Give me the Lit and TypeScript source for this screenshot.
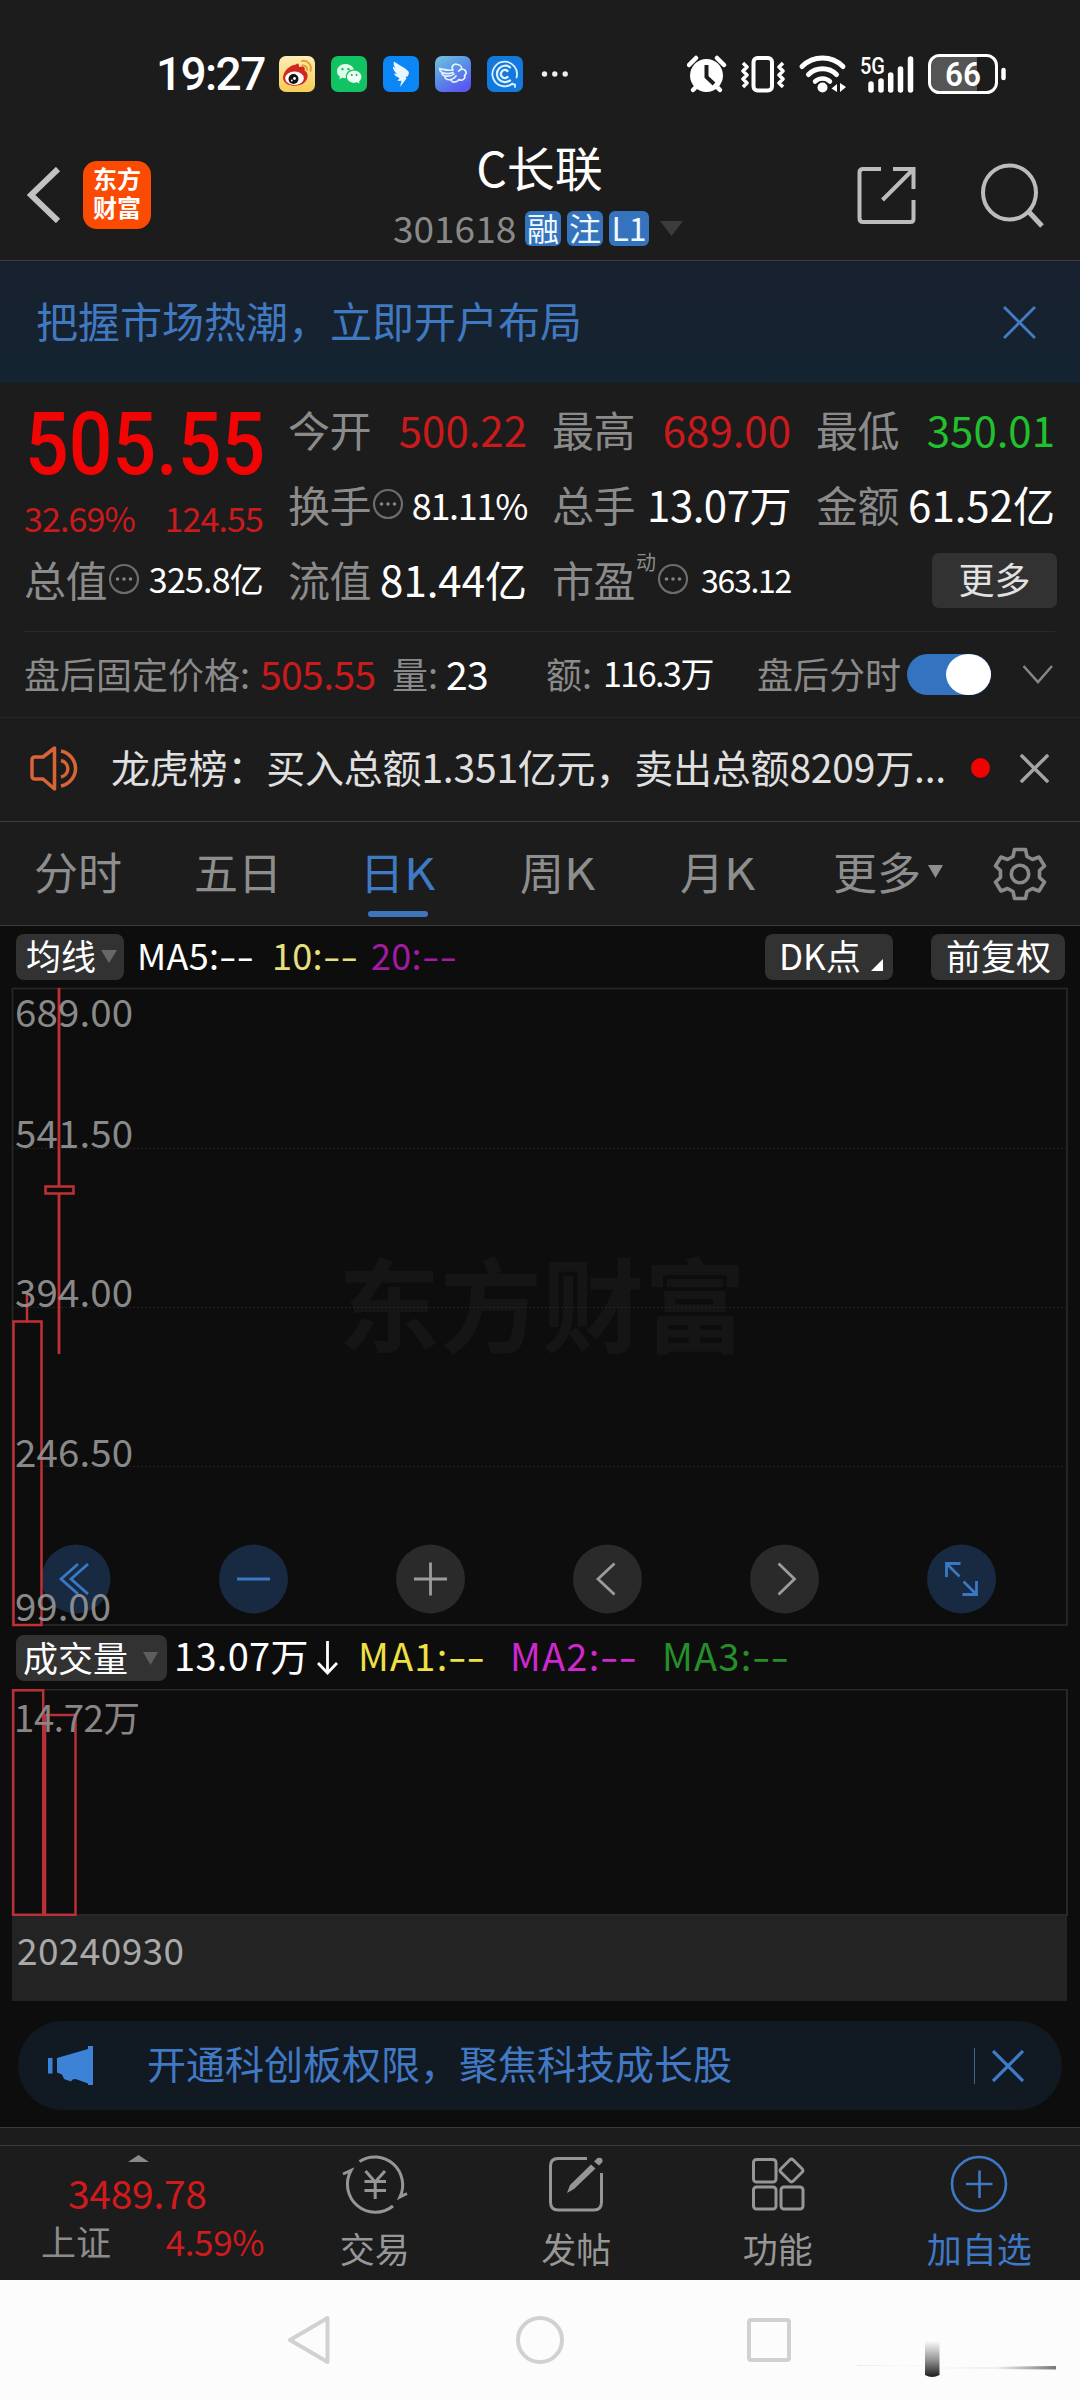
import { LitElement, html, svg, css } from "lit";
import { customElement } from "lit/decorators.js";

const x = (size: number, stroke: number, color: string) => html`
  <svg width=${size} height=${size} viewBox="0 0 32 32" fill="none" stroke=${color} stroke-width=${stroke}>
    <path d="M1 1L31 31M31 1L1 31" />
  </svg>`;

const more = html`
  <svg class="dots" width="32" height="32" viewBox="0 0 32 32">
    <circle cx="16" cy="16" r="14" fill="none" stroke="#6c6c6c" stroke-width="2.2" />
    <g fill="#858585"><circle cx="9.5" cy="16" r="1.8" /><circle cx="16" cy="16" r="1.8" /><circle cx="22.5" cy="16" r="1.8" /></g>
  </svg>`;

const appIcons = [
  html`<svg width="36" height="36" viewBox="0 0 36 36">
    <defs><linearGradient id="wb" x2="0" y2="1"><stop stop-color="#fdeeb4" /><stop offset="1" stop-color="#f8cc55" /></linearGradient></defs>
    <rect width="36" height="36" rx="7" fill="url(#wb)" />
    <path d="M4 22C4 15 11 9 17 8.500C18.500 6.500 20.500 8 20 11C24 9.500 27 11 25.500 14.500C30 17 29.500 23 25 27C19 31.500 5 31 4 22Z" fill="#d32822" />
    <ellipse cx="15.500" cy="22.300" rx="9.300" ry="6.700" fill="#fff" />
    <circle cx="14.500" cy="23" r="5" fill="#16100c" /><circle cx="15.500" cy="22.500" r="1.400" fill="#fff" /><circle cx="12.800" cy="24.500" r=".9" fill="#fff" />
    <path d="M23 5C29 4 33 9 31.500 15M23.500 9.500C27 9 28.500 11.500 28 14" fill="none" stroke="#e3a030" stroke-width="2" stroke-linecap="round" />
  </svg>`,
  html`<svg width="36" height="36" viewBox="0 0 36 36">
    <rect width="36" height="36" rx="7" fill="#12c364" />
    <path d="M14.500 8C9.300 8 6 11.300 6 15.200C6 17.500 7.200 19.400 9 20.700L8.300 23.300L11.300 21.800C12.500 22.100 13.600 22.300 15 22.300C14 17 18 13.500 23 13.600C22 10.200 18.600 8 14.500 8Z" fill="#dcfbe8" />
    <path d="M23.200 14.800C19 14.800 16 17.500 16 20.800C16 24.200 19 26.800 23.200 26.800C24.200 26.800 25.200 26.600 26.200 26.300L28.600 27.500L28 25.400C29.500 24.200 30.400 22.600 30.400 20.800C30.400 17.500 27.300 14.800 23.200 14.800Z" fill="#f0fff6" />
    <g fill="#12a356"><circle cx="11.500" cy="13.200" r="1.100" /><circle cx="17.500" cy="13.200" r="1.100" /><circle cx="20.800" cy="19" r="1" /><circle cx="25.500" cy="19" r="1" /></g>
  </svg>`,
  html`<svg width="36" height="36" viewBox="0 0 36 36">
    <rect width="36" height="36" rx="7" fill="#0d86f5" />
    <path d="M11 5.500C14 8 22 11.500 25.500 15.500C26.500 17 25.500 19 24.500 20.500L22.500 20.800L23.500 22.500L17 31L18.500 24.800L14.500 25L16.500 22C13 21 11.500 19 11 17.500L14 18C11 15.500 9.500 12.500 10 10.500L12.500 12C10.500 9.500 10.300 7 11 5.500Z" fill="#e8f6ff" />
  </svg>`,
  html`<svg width="36" height="36" viewBox="0 0 36 36">
    <defs><linearGradient id="cl" x2=".6" y2="1"><stop stop-color="#6fc7e0" /><stop offset=".5" stop-color="#5a92e6" /><stop offset="1" stop-color="#5a5af0" /></linearGradient></defs>
    <rect width="36" height="36" rx="7" fill="url(#cl)" />
    <path d="M4.500 12.500C9 13.500 13 15 18 14C15.500 10.500 19 7 22.500 8.500C26 9 27 11.500 26.500 13C31 13 32.500 17 29.500 19.500C31 22.500 27 25.500 24 23.500C21.500 27 17 27 15.500 23.500C12 24.500 9 22 10.500 20C7.500 19.500 6.500 17.500 7 16.500C5.500 15.500 4.500 14 4.500 12.500M10.500 20C14 20.500 17 20 19 18M7 16.500C11 18 15 18 18 16.500M15.500 23.500C18 23 20 21.500 21 20M26.500 13L23.500 15" fill="none" stroke="#e4f2ff" stroke-width="1.700" stroke-linecap="round" stroke-linejoin="round" />
  </svg>`,
  html`<svg width="36" height="36" viewBox="0 0 36 36">
    <rect width="36" height="36" rx="7" fill="#1479dc" />
    <g fill="none" stroke="#dcf2ff" stroke-linecap="round">
      <path d="M25.500 27.500A12.300 12.300 0 1 1 29.500 21.500M24.500 28L28 28.500V31" stroke-width="1.800" />
      <path d="M23 11.300A8.200 8.200 0 1 0 23 24.500" stroke-width="2.200" />
      <path d="M20.500 15A4 4 0 1 0 20.500 21" stroke-width="2.400" />
    </g>
  </svg>`,
];

@customElement("status-bar")
export class StatusBar extends LitElement {
  static styles = css`
    :host { display: flex; align-items: center; height: 148px; padding-left: 156px; box-sizing: border-box; }
    svg { display: block; flex: none; }
    .time { font: 500 46px/48px Roboto, sans-serif; letter-spacing: -1.6px; color: #fff; width: 123px; white-space: nowrap; }
    .apps { display: flex; gap: 16px; width: 261px; }
    .net { font: 500 23px/24px "Roboto", sans-serif; }
  `;
  render() {
    return html`
      <div class="time">19:27</div>
      <div class="apps">${appIcons}</div>
      <svg width="147" height="40" viewBox="0 0 147 40" fill="#eee"><circle cx="4.500" cy="20" r="2.700" /><circle cx="14.800" cy="20" r="2.700" /><circle cx="25.200" cy="20" r="2.700" /></svg>
      <svg width="324" height="44" viewBox="687 51 324 44" fill="none" stroke="#fff">
        <circle cx="706.500" cy="74.500" r="16.500" fill="#fff" stroke="none" />
        <path d="M689 64L696 57M724 64L717 57" stroke-width="4.500" stroke-linecap="round" />
        <path d="M693 89L698 84M720 89L715 84" stroke-width="4.500" stroke-linecap="round" />
        <path d="M706.500 64V76L714 83" stroke="#1c1c1c" stroke-width="4" />
        <rect x="753.500" y="57" width="18.500" height="32.500" rx="4" stroke-width="4" />
        <path d="M743 62L747 66L743 70L747 74L743 78L747 82L743 86M783 62L779 66L783 70L779 74L783 78L779 82L783 86" stroke-width="3.500" stroke-linejoin="round" />
        <path d="M802 65.500A29 29 0 0 1 843 65.500M808.500 73.500A20 20 0 0 1 836.500 73.500" stroke-width="5" stroke-linecap="round" />
        <path d="M815 80.500A11 11 0 0 1 830 80.500" stroke-width="4.500" stroke-linecap="round" />
        <circle cx="822.500" cy="86.500" r="5" fill="#fff" stroke="none" />
        <path d="M837 83V91L831.500 87.500ZM840 82L846 86L840 91Z" fill="#fff" stroke="none" />
        <text class="net" x="860" y="73" fill="#fff" stroke="none" textLength="25" lengthAdjust="spacingAndGlyphs">5G</text>
        <path d="M871 83V89M881 80V89M890.700 74V89M900.500 68V89M910.500 58V89" stroke-width="5.500" stroke-linecap="round" />
        <path d="M940 56H977V90H940A9 9 0 0 1 931 81V65A9 9 0 0 1 940 56Z" fill="#555" stroke="none" />
        <rect x="929.500" y="54.500" width="67" height="37" rx="10" stroke-width="3" />
        <path d="M1003.500 69V77" stroke-width="4.500" stroke-linecap="round" />
        <text x="945" y="85" fill="#fff" stroke="none" font-family="Roboto" font-weight="600" font-size="34" textLength="36" lengthAdjust="spacingAndGlyphs">66</text>
      </svg>`;
  }
}

@customElement("stock-header")
export class StockHeader extends LitElement {
  static styles = css`
    :host { display: grid; grid-template-columns: 83px 68px 1fr 59px 65px 63px 36px; grid-template-rows: 94px; align-items: center; height: 113px; border-bottom: 1px solid #3c3c3e; box-sizing: border-box; }
    svg { display: block; }
    .back { margin-left: 27px; }
    .brand { width: 68px; height: 68px; border-radius: 14px; background: #fb4b02; color: #fff; font-weight: 700; font-size: 24px; line-height: 28.500px; text-align: center; padding-top: 3px; box-sizing: border-box; white-space: pre; }
    .mid { width: 389px; justify-self: center; margin-left: 71px; height: 119px; }
    .title { font-size: 48px; line-height: 60px; color: #fff; text-align: center; }
    .sub { display: flex; align-items: center; height: 62px; padding-left: 48px; gap: 6px; }
    .code { font-size: 37px; line-height: 44px; color: #8a8a8a; width: 126px; }
    .badge { display: flex; align-items: center; justify-content: center; width: 36px; height: 35px; margin-top: 3px; border-radius: 6px; background: #3573be; color: #eefaff; font-size: 32px; line-height: 30px; padding-bottom: 3px; box-sizing: border-box; }
    .lv { width: 40px; }
    .tri { margin: 4px 0 0 5px; }
    .search { grid-column: 6; }
  `;
  render() {
    return html`
      <svg class="back" width="34" height="56" viewBox="0 0 34 56" fill="none" stroke="#c2c2c2" stroke-width="6"><path d="M31 2L4 28L31 54" /></svg>
      <div class="brand">东方
财富</div>
      <div class="mid">
        <div class="title">C长联</div>
        <div class="sub">
          <span class="code">301618</span><span class="badge">融</span><span class="badge">注</span><span class="badge lv">L1</span>
          <svg class="tri" width="23" height="15" viewBox="0 0 23 15"><path d="M0 0H23L11.500 15Z" fill="#403b3b" /></svg>
        </div>
      </div>
      <svg width="59" height="59" viewBox="857 165 59 59" fill="none" stroke="#bcbcbc" stroke-width="4">
        <path d="M881 168H863Q859.500 168 859.500 171.500V217Q859.500 221 863 221H910.500Q913.500 221 913.500 218V199M893 168H913.500V188M913 168.500L882.500 199" />
      </svg>
      <svg class="search" width="63" height="65" viewBox="981 162 63 65" fill="none" stroke="#bcbcbc"><ellipse cx="1009.500" cy="191.500" rx="26.500" ry="27" stroke-width="4" /><path d="M1029 211L1042 225" stroke-width="5" /></svg>
    `;
  }
}

@customElement("quote-panel")
export class QuotePanel extends LitElement {
  static styles = css`
    :host { display: block; height: 334px; position: relative; }
    svg { display: block; flex: none; }
    .grid { display: grid; grid-template-columns: repeat(4, 239px); column-gap: 25px; grid-template-rows: 75px 75px 75px; padding: 8px 25px 0 24px; height: 248px; box-sizing: border-box; }
    .cell { display: flex; align-items: center; justify-content: space-between; white-space: nowrap; font-size: 42px; line-height: 50px; color: #fff; padding-top: 1px; box-sizing: border-box; }
    .label { display: flex; align-items: center; gap: 1px; color: #8b8b8b; letter-spacing: -.5px; }
    .red { color: #cb1a1c; }
    .green { color: #21c02d; }
    .s { font-size: 36px; letter-spacing: -1.300px; }
    .t { font-size: 34px; letter-spacing: -.8px; }
    .u { font-size: 32px; letter-spacing: -1.300px; }
    .w { letter-spacing: -.5px; }
    .lead { grid-row: span 2; display: flex; flex-direction: column; color: #f00404; }
    .price { font: 500 87px/86px Roboto, sans-serif; height: 96px; padding-top: 10px; box-sizing: border-box; white-space: nowrap; transform: scaleX(.885); transform-origin: 0 0; margin-left: 1px; }
    .chg { display: flex; justify-content: space-between; font-size: 34px; line-height: 40px; letter-spacing: -.9px; color: #cb1a1c; padding-top: 11px; }
    .sup { font-size: 20px; line-height: 24px; align-self: flex-start; margin-top: -4px; letter-spacing: 0; }
    .btn { justify-self: end; align-self: center; width: 125px; height: 55px; margin: 3px -2px 0 0; border-radius: 7px; background: #323232; color: #e2e2e2; font-size: 36px; line-height: 51px; text-align: center; }
    .after { display: flex; align-items: center; height: 85px; margin: 0 25px 0 24px; font-size: 36px; line-height: 44px; color: #8b8b8b; white-space: nowrap; box-sizing: border-box; border-top: 1px solid #2a2a2a; }
    .after span { display: block; margin-top: -2px; }
    .fix { font-size: 39px; letter-spacing: -.6px; }
    .amt { font-size: 34px; letter-spacing: -1.500px; }
    .white { color: #fff; }
    .c1 { width: 236px; } .c2 { width: 132px; } .c3 { width: 54px; } .c4 { width: 100px; } .c5 { width: 57px; } .c6 { width: 154px; } .c7 { width: 149px; }
  `;
  render() {
    return html`
      <div class="grid">
        <div class="lead"><div class="price">505.55</div><div class="chg"><span>32.69%</span><span>124.55</span></div></div>
        <div class="cell"><span class="label">今开</span><span class="red">500.22</span></div>
        <div class="cell"><span class="label">最高</span><span class="red">689.00</span></div>
        <div class="cell"><span class="label">最低</span><span class="green">350.01</span></div>
        <div class="cell"><span class="label">换手${more}</span><span class="s">81.11%</span></div>
        <div class="cell"><span class="label">总手</span><span class="w">13.07万</span></div>
        <div class="cell"><span class="label">金额</span><span>61.52亿</span></div>
        <div class="cell"><span class="label">总值${more}</span><span class="t">325.8亿</span></div>
        <div class="cell"><span class="label">流值</span><span>81.44亿</span></div>
        <div class="cell"><span class="label">市盈<span class="sup">动</span>${more}</span><span class="u">363.12</span></div>
        <div class="btn">更多</div>
      </div>
      <div class="after">
        <span class="c1">盘后固定价格:</span><span class="c2 fix red">505.55</span><span class="c3">量:</span><span class="c4 fix white">23</span>
        <span class="c5">额:</span><span class="c6 amt white">116.3万</span><span class="c7">盘后分时</span>
        <svg width="148" height="42" viewBox="906 653 148 42">
          <rect x="907" y="654" width="84" height="41" rx="20.500" fill="#3373c0" /><ellipse cx="968.500" cy="674.500" rx="22.500" ry="20.500" fill="#fff" />
          <path d="M1023.500 666L1038 682L1052 666" fill="none" stroke="#868686" stroke-width="2.500" />
        </svg>
      </div>`;
  }
}

@customElement("notice-row")
export class NoticeRow extends LitElement {
  static styles = css`
    :host { display: flex; align-items: center; height: 105px; box-sizing: border-box; border-top: 1px solid #272727; border-bottom: 1px solid #3c3c3c; padding-left: 29px; padding-bottom: 3px; }
    svg { display: block; flex: none; }
    .text { width: 860px; margin-left: 29px; font-size: 39px; line-height: 50px; letter-spacing: -.2px; color: #e0e0e0; white-space: nowrap; padding-bottom: 5px; }
    .dot { width: 19px; height: 20px; border-radius: 50%; background: #f00202; margin-right: 30px; }
  `;
  render() {
    return html`
      <svg width="53" height="46" viewBox="28 745 53 46" fill="none" stroke="#d96436" stroke-width="3.500" stroke-linejoin="round">
        <path d="M53.500 748V789L42 779H34Q31 779 31 776V760Q31 757 34 757H42Z" />
        <path d="M60 751A19 18 0 0 1 60 786M60 760.500A9 8.500 0 0 1 60 777" />
      </svg>
      <div class="text">龙虎榜：买入总额1.351亿元，卖出总额8209万...</div>
      <div class="dot"></div>${x(29, 3.8, "#a4a4a4")}`;
  }
}

@customElement("period-tabs")
export class PeriodTabs extends LitElement {
  static styles = css`
    :host { display: flex; align-items: center; height: 104px; box-sizing: border-box; border-bottom: 1px solid #3c3c3c; padding-left: 34px; font-size: 44px; line-height: 54px; color: #8e8e8e; }
    svg { display: block; }
    .tab { display: flex; align-items: center; width: 160px; height: 103px; padding-bottom: 5px; box-sizing: border-box; white-space: nowrap; }
    .tab:nth-child(2) { width: 166px; }
    .tab:nth-child(3) { width: 160px; }
    .tab:nth-child(5) { width: 153px; }
    .tab:nth-child(6) { width: 160px; }
    .k { display: inline-block; transform: scaleX(1.1); transform-origin: 0 0; }
    .on { color: #3f7ac4; flex-direction: column; align-items: flex-start; padding: 22px 0 0; gap: 13px; }
    .on i { display: block; width: 60px; height: 6px; border-radius: 3px; background: #3f76bb; margin-left: 8px; }
  `;
  render() {
    return html`
      <div class="tab">分时</div><div class="tab">五日</div><div class="tab on"><span>日<span class="k">K</span></span><i></i></div><div class="tab">周<span class="k">K</span></div><div class="tab">月<span class="k">K</span></div>
      <div class="tab">更多<svg width="24" height="14" viewBox="0 0 24 14"><path d="M7 1H22L14.500 14Z" fill="#8e8e8e" /></svg></div>
      <svg width="54" height="54" viewBox="-27 -27 54 54" fill="none" stroke="#8a8a8a" stroke-width="3.600" stroke-linejoin="round">
        <path d="M-5.500 -24.500H5.500L7 -17.500L12.500 -14.500L19 -17L24.500 -8L19.500 -3.500V3.500L24.500 8L19 17L12.500 14.500L7 17.500L5.500 24.500H-5.500L-7 17.500L-12.500 14.500L-19 17L-24.500 8L-19.500 3.500V-3.500L-24.500 -8L-19 -17L-12.500 -14.500L-7 -17.500Z" />
        <circle r="8.700" />
      </svg>`;
  }
}

@customElement("chart-board")
export class ChartBoard extends LitElement {
  static styles = css`
    :host { display: block; height: 1201px; background: #0d0d0d; }
    svg { display: block; flex: none; }
    .bar { display: flex; align-items: center; height: 61px; padding-left: 16px; font-size: 36px; line-height: 44px; color: #fff; white-space: nowrap; }
    .vol { height: 62px; font-size: 38px; }
    .chip { display: flex; align-items: center; height: 46px; border-radius: 8px; background: #323232; font-size: 35px; line-height: 42px; box-sizing: border-box; }
    .chip span { display: block; margin-top: -3px; }
    .ma { width: 108px; padding-left: 10px; gap: 5px; }
    .vo { width: 151px; padding-left: 7px; gap: 15px; }
    .dk { width: 128px; padding-left: 14px; gap: 10px; }
    .fq { width: 134px; padding-left: 15px; margin-left: 38px; }
    .leg { display: block; margin-top: -5px; letter-spacing: .3px; }
    .leg b { display: inline-block; font-weight: 400; letter-spacing: 0; transform: scaleX(1.4); transform-origin: 0 0; }
    .vol .leg { margin-top: -6px; }
    .vol .m { letter-spacing: 1.200px; }
    .m5 { width: 135px; margin-left: 13px; }
    .m10 { width: 99px; color: #e6e07e; }
    .m20 { width: 394px; color: #a31ba3; }
    .now { width: 143px; margin-left: 7px; }
    .v1 { width: 152px; margin-left: 20px; color: #eee045; }
    .v2 { width: 152px; color: #cf28cf; }
    .v3 { color: #268f2a; }
    .date { margin: 0 13px 0 12px; height: 85px; background: #232324; color: #a9a9a9; font-size: 37px; line-height: 67px; letter-spacing: .4px; padding-left: 5px; box-sizing: border-box; }
    .promo { display: flex; align-items: center; height: 89px; margin: 20px 18px 0; border-radius: 45px; background: #111a23; color: #4279c4; font-size: 39px; line-height: 48px; box-sizing: border-box; padding-left: 28px; white-space: nowrap; }
    .promo span { width: 827px; margin: -8px 0 0 53px; }
    .sep { width: 1px; height: 36px; background: #40658f; margin-right: 17px; }
    text { font-family: "Noto Sans CJK SC", sans-serif; }
  `;
  render() {
    const labels: [string, number, number][] = [["689.00", 1027, 118], ["541.50", 1148, 118], ["394.00", 1307, 118], ["246.50", 1467, 118], ["99.00", 1621, 96]];
    const knobs: [number, boolean, string][] = [
      [76, true, "M2 -15L-15 0L2 15M12 -15L-5 0L12 15"],
      [253.5, true, "M-16.500 0H16.500"],
      [430.5, false, "M-16.500 0H16.500M0 -16.500V16.500"],
      [607.5, false, "M7 -15.500L-9.500 0L7 15.500"],
      [784.5, false, "M-6 -15.500L10 0L-6 15.500"],
      [961.5, true, "M-15 -2V-15.500H-1M-14.500 -15L-2 -2.500M15 2V15.500H1M14.500 15L2 2.500"],
    ];
    return html`
      <div class="bar">
        <div class="chip ma"><span>均线</span><svg width="16" height="13" viewBox="0 0 16 13"><path d="M0 0H16L8 13Z" fill="#686868" /></svg></div>
        <div class="leg m5">MA5:<b>--</b></div>
        <div class="leg m10">10:<b>--</b></div>
        <div class="leg m20">20:<b>--</b></div>
        <div class="chip dk"><span>DK点</span><svg width="12" height="28" viewBox="0 0 12 28"><path d="M12 16V28H0Z" fill="#fff" /></svg></div>
        <div class="chip fq"><span>前复权</span></div>
      </div>
      <svg width="1080" height="640" viewBox="0 987 1080 640">
        <text x="338" y="1345" font-size="102" font-weight="700" fill="#151515" textLength="408">东方财富</text>
        <rect x="12.500" y="988.500" width="1054.500" height="636.500" fill="none" stroke="#272727" stroke-width="1.800" />
        ${[1148.5, 1307.5, 1466.5].map((y) => svg`<path d="M13 ${y}H1067" stroke="#232323" stroke-dasharray="2 2" />`)}
        ${knobs.map(([cx, blue, d]) => svg`<g transform="translate(${cx} 1579)">
          <circle r="34.500" fill=${blue ? "#182a42" : "#2a2a2a"} />
          <path d=${d} fill="none" stroke=${blue ? "#3b78c4" : "#9c9c9c"} stroke-width="2.800" /></g>`)}
        <g fill="none" stroke="#c23034" stroke-width="2.500">
          <rect x="13.500" y="1321.500" width="28" height="303.500" /><path d="M27 1293V1321" />
          <path d="M59 988V1186M59 1194V1354" stroke-width="2.800" /><rect x="45.500" y="1186.500" width="28" height="7" />
        </g>
        ${labels.map(([t, y, w]) => svg`<text x="15" y=${y} font-size="38.500" fill="#969696" fill-opacity=".92" textLength=${w}>${t}</text>`)}
      </svg>
      <div class="bar vol">
        <div class="chip vo"><span>成交量</span><svg width="15" height="13" viewBox="0 0 15 13"><path d="M0 0H15L7.500 13Z" fill="#5e5e5e" /></svg></div>
        <div class="leg now">13.07万</div>
        <svg width="21" height="34" viewBox="0 0 21 34" fill="none" stroke="#fff" stroke-width="2.800"><path d="M10.500 0V32M1 22L10.500 32L20 22" /></svg>
        <div class="leg m v1">MA1:<b>--</b></div>
        <div class="leg m v2">MA2:<b>--</b></div>
        <div class="leg m v3">MA3:<b>--</b></div>
      </div>
      <svg width="1080" height="227" viewBox="0 1689 1080 227">
        <rect x="12.500" y="1689.500" width="1054.500" height="225.500" fill="none" stroke="#2b2b2b" stroke-width="1.800" />
        <g fill="none" stroke="#b93036" stroke-width="2.500"><rect x="13.200" y="1690.300" width="30" height="224.500" /><rect x="45" y="1715" width="30.500" height="199.800" /></g>
        <text x="14" y="1732" font-size="36.500" fill="#8d8585" textLength="126">14.72万</text>
      </svg>
      <div class="date">20240930</div>
      <div class="promo">
        <svg width="48" height="40" viewBox="46 2045 48 40" fill="#3c82d6"><path d="M48 2057H52.500V2072.500H48ZM57 2057L88 2048V2045H93V2084H88V2082.500L77 2078.500Q73 2077 71 2080.500L64 2078L62 2073.500L57 2071.500Z" /></svg>
        <span>开通科创板权限，聚焦科技成长股</span><div class="sep"></div>${x(32, 3.3, "#3f7cc8")}
      </div>`;
  }
}

@customElement("bottom-bar")
export class BottomBar extends LitElement {
  static styles = css`
    :host { display: grid; grid-template-columns: 274px repeat(4, 201.500px); height: 153px; box-sizing: border-box; border-top: 1px solid #3a3a3a; color: #979797; padding-top: 17px; }
    svg { display: block; }
    .index { border-top: 1px solid #3a3a3a; padding: 9px 10px 0 41px; }
    .up { margin-left: 87px; }
    .val { font-size: 39px; line-height: 50px; margin: 5px 0 0 27px; letter-spacing: -.3px; color: #cf1b1d; }
    .row { display: flex; justify-content: space-between; font-size: 35px; line-height: 40px; margin-top: 4px; color: #8c8c8c; }
    .row span:last-child { color: #cf1b1d; letter-spacing: -.4px; }
    .item { border-top: 1px solid #3a3a3a; display: flex; flex-direction: column; align-items: center; padding-top: 8px; font-size: 35px; line-height: 44px; gap: 12px; }
    .blue { color: #3f78c4; }
    .wide { width: 274px; }
    .item:last-child, .end { border-top: 1px solid #3a3a3a; }
  `;
  render() {
    return html`
      <div class="index">
        <svg class="up" width="21" height="7" viewBox="0 0 21 7"><path d="M0 7L10.500 0L21 7Z" fill="#8a8a8a" /></svg>
        <div class="val">3489.78</div>
        <div class="row"><span>上证</span><span>4.59%</span></div>
      </div>
      <div class="item"><svg width="68" height="60" viewBox="341.500 2154 68 60" fill="none" stroke="#969696" stroke-width="3">
        <path d="M360 2161.500A28 28 0 0 1 400.500 2197L407.500 2193.500M393.500 2206A28 28 0 0 1 351.500 2170.500L343.500 2174" />
        <path d="M366 2171L375.700 2182L385.500 2171M365 2181.500H386.500M365 2190.500H386.500M375.700 2182V2199" /></svg>交易</div>
      <div class="item"><svg width="56" height="60" viewBox="549 2154 56 60" fill="none" stroke="#969696" stroke-width="3">
        <path d="M588 2158.500H559Q551.500 2158.500 551.500 2166V2202Q551.500 2210 559 2210H595Q602.500 2210 602.500 2202V2173" />
        <path d="M568 2193L571 2185L592 2164.500L596.500 2168.500L575 2189ZM595 2161.500L598.500 2158Q604 2156.500 603.500 2162L600 2165.500Z" fill="#969696" stroke="none" /></svg>发帖</div>
      <div class="item"><svg width="54" height="60" viewBox="751 2154 54 60" fill="none" stroke="#969696" stroke-width="3">
        <rect x="753.500" y="2159.500" width="22.500" height="22.500" rx="3" /><rect x="753.500" y="2187" width="22.500" height="22" rx="3" /><rect x="781" y="2187" width="22" height="22" rx="3" />
        <rect x="-8.700" y="-8.700" width="17.400" height="17.400" rx="2.500" transform="translate(791.500 2170.500) rotate(45)" /></svg>功能</div>
      <div class="item blue"><svg width="58" height="60" viewBox="950 2154 58 60" fill="none" stroke="#3f78c4" stroke-width="2.600">
        <circle cx="979" cy="2184" r="27" /><path d="M966 2184H992.500M979.500 2170.500V2198" /></svg>加自选</div>`;
  }
}

@customElement("system-nav")
export class SystemNav extends LitElement {
  static styles = css`:host { display: block; height: 120px; background: #fcfcfc; } svg { display: block; }`;
  render() {
    return html`<svg width="1080" height="120" viewBox="0 2280 1080 120" fill="none" stroke="#d1d1d1" stroke-width="4" stroke-linejoin="round">
      <defs>
        <linearGradient id="k" x2="0" y2="1"><stop stop-color="#fcfcfc" /><stop offset=".5" stop-color="#999" /><stop offset="1" stop-color="#1c1c1c" /></linearGradient>
        <linearGradient id="l"><stop stop-color="#eaeaea" /><stop offset=".2" stop-color="#f8f8f8" /><stop offset=".7" stop-color="#f0f0f0" /><stop offset="1" stop-color="#777" /></linearGradient>
      </defs>
      <path d="M327.500 2318V2362L290 2340Z" /><circle cx="540" cy="2340" r="22" /><rect x="749" y="2320" width="40" height="40" rx="2" />
      <path d="M857 2365H925V2366H857ZM940 2367.500L1056 2366V2369.500L940 2368.500Z" fill="url(#l)" stroke="none" />
      <path d="M925 2341H939.500V2375Q932 2379 925 2375Z" fill="url(#k)" stroke="none" />
    </svg>`;
  }
}

@customElement("app-root")
export class AppRoot extends LitElement {
  static styles = css`
    :host { display: block; width: 1080px; height: 2400px; overflow: hidden; background: #1c1c1c; font-family: "Noto Sans CJK SC", sans-serif; }
    .banner { display: flex; align-items: center; height: 122px; box-sizing: border-box; padding-left: 36px; background: linear-gradient(#18212f, #16222f 60%, #132331); color: #4079c0; font-size: 42px; line-height: 52px; }
    .banner span { width: 967px; margin-top: -5px; }
  `;
  render() {
    return html`
      <status-bar></status-bar>
      <stock-header></stock-header>
      <div class="banner"><span>把握市场热潮，立即开户布局</span>${x(33, 2.8, "#437cc2")}</div>
      <quote-panel></quote-panel>
      <notice-row></notice-row>
      <period-tabs></period-tabs>
      <chart-board></chart-board>
      <bottom-bar></bottom-bar>
      <system-nav></system-nav>`;
  }
}
